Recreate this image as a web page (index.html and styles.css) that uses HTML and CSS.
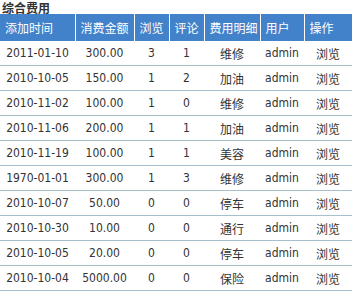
FILE: index.html
```html
<!DOCTYPE html>
<html>
<head>
<meta charset="utf-8">
<link rel="stylesheet" href="styles.css">
</head>
<body>
<div class="title">综合费用</div>
<table class="grid">
  <thead>
    <tr>
      <th class="c1">添加时间</th>
      <th class="c2">消费金额</th>
      <th class="c3">浏览</th>
      <th class="c4">评论</th>
      <th class="c5">费用明细</th>
      <th class="c6">用户</th>
      <th class="c7">操作</th>
    </tr>
  </thead>
  <tbody>
    <tr><td>2011-01-10</td><td>300.00</td><td>3</td><td>1</td><td>维修</td><td>admin</td><td>浏览</td></tr>
    <tr><td>2010-10-05</td><td>150.00</td><td>1</td><td>2</td><td>加油</td><td>admin</td><td>浏览</td></tr>
    <tr><td>2010-11-02</td><td>100.00</td><td>1</td><td>0</td><td>维修</td><td>admin</td><td>浏览</td></tr>
    <tr><td>2010-11-06</td><td>200.00</td><td>1</td><td>1</td><td>加油</td><td>admin</td><td>浏览</td></tr>
    <tr><td>2010-11-19</td><td>100.00</td><td>1</td><td>1</td><td>美容</td><td>admin</td><td>浏览</td></tr>
    <tr><td>1970-01-01</td><td>300.00</td><td>1</td><td>3</td><td>维修</td><td>admin</td><td>浏览</td></tr>
    <tr><td>2010-10-07</td><td>50.00</td><td>0</td><td>0</td><td>停车</td><td>admin</td><td>浏览</td></tr>
    <tr><td>2010-10-30</td><td>10.00</td><td>0</td><td>0</td><td>通行</td><td>admin</td><td>浏览</td></tr>
    <tr><td>2010-10-05</td><td>20.00</td><td>0</td><td>0</td><td>停车</td><td>admin</td><td>浏览</td></tr>
    <tr><td>2010-10-04</td><td>5000.00</td><td>0</td><td>0</td><td>保险</td><td>admin</td><td>浏览</td></tr>
  </tbody>
</table>
</body>
</html>
```
FILE: styles.css
```css
html, body {
  margin: 0;
  padding: 0;
  background: #ffffff;
}
body {
  font-family: "DejaVu Sans Condensed", "DejaVu Sans", "Noto Sans CJK SC", sans-serif;
  font-size: 12px;
  color: #333333;
}
.title {
  height: 14px;
  padding-left: 2px;
  font-family: "Noto Sans CJK SC", sans-serif;
  font-weight: bold;
  font-size: 12px;
  line-height: 15px;
  color: #333333;
}
.grid {
  border-collapse: collapse;
  table-layout: fixed;
  width: 352px;
}
.grid th {
  height: 27px;
  padding: 0 0 0 5px;
  background: #4282ca;
  color: #ffffff;
  font-family: "Noto Sans CJK SC", sans-serif;
  font-weight: normal;
  font-size: 12px;
  text-align: left;
  border-right: 1px solid #ffffff;
  box-sizing: border-box;
  white-space: nowrap;
  overflow: hidden;
}
.grid th:last-child {
  border-right: none;
}
.c1 { width: 75px; }
.c2 { width: 59px; }
.c3 { width: 35px; }
.c4 { width: 35px; }
.c5 { width: 56px; }
.c6 { width: 44px; }
.c7 { width: 48px; }
.grid td {
  height: 24px;
  padding: 0;
  text-align: center;
  border-bottom: 1px solid #a7c0cd;
  white-space: nowrap;
}
```
